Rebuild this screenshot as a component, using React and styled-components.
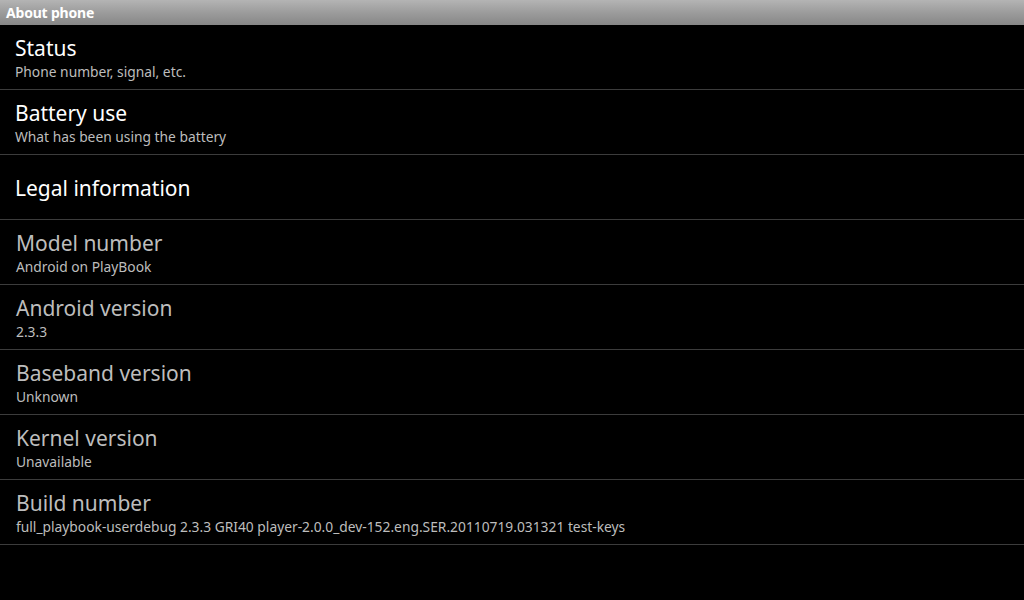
import React from 'react'
import styled, { createGlobalStyle } from 'styled-components'

const GlobalStyle = createGlobalStyle`
  html, body {
    margin: 0;
    padding: 0;
    background: #000;
  }
  body {
    font-family: 'Noto Sans', 'Open Sans', sans-serif;
  }
`

const Screen = styled.div`
  width: 1024px;
  height: 600px;
  background: #000;
  overflow: hidden;
`

const TitleBar = styled.div`
  height: 25px;
  display: flex;
  align-items: center;
  padding-left: 6px;
  background: linear-gradient(to bottom, #b4b4b4 0%, #9c9c9c 50%, #878787 100%);
  color: #fff;
  font-size: 14px;
  font-weight: bold;
  letter-spacing: -0.2px;
`

const List = styled.div`
  display: flex;
  flex-direction: column;
`

const Row = styled.div`
  height: 64px;
  box-sizing: border-box;
  padding-top: 2px;
  border-bottom: 1px solid #3c3c3c;
  display: flex;
  flex-direction: column;
  justify-content: center;
  padding-left: ${p => (p.disabled ? '16px' : '15px')};
  height: 65px;
`

const Title = styled.div`
  font-size: 21px;
  line-height: 25px;
  color: ${p => (p.disabled ? '#bdbdbd' : '#fff')};
`

const Summary = styled.div`
  font-size: 13.8px;
  line-height: 18px;
  color: #bdbdbd;
  margin-top: 2px;
`

const items = [
  { title: 'Status', summary: 'Phone number, signal, etc.' },
  { title: 'Battery use', summary: 'What has been using the battery' },
  { title: 'Legal information' },
  { title: 'Model number', summary: 'Android on PlayBook', disabled: true },
  { title: 'Android version', summary: '2.3.3', disabled: true },
  { title: 'Baseband version', summary: 'Unknown', disabled: true },
  { title: 'Kernel version', summary: 'Unavailable', disabled: true },
  {
    title: 'Build number',
    summary: 'full_playbook-userdebug 2.3.3 GRI40 player-2.0.0_dev-152.eng.SER.20110719.031321 test-keys',
    disabled: true,
  },
]

const App = () => {
  return (
    <Screen>
      <GlobalStyle />
      <TitleBar>About phone</TitleBar>
      <List>
        {items.map(item => (
          <Row key={item.title} disabled={item.disabled}>
            <Title disabled={item.disabled}>{item.title}</Title>
            {item.summary && <Summary>{item.summary}</Summary>}
          </Row>
        ))}
      </List>
    </Screen>
  )
}

export default App
